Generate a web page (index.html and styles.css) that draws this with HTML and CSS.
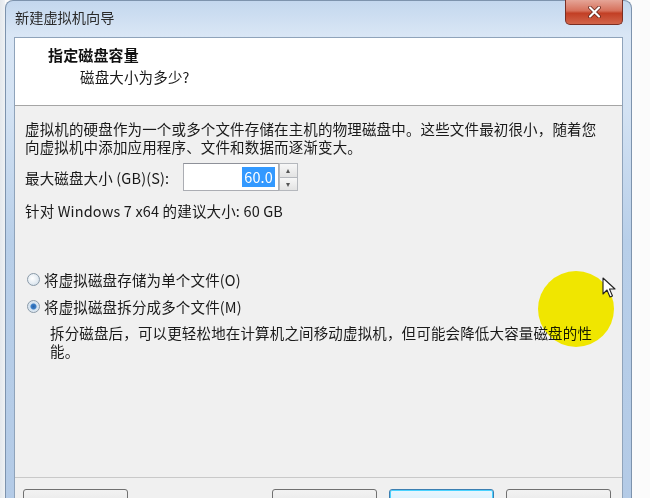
FILE: index.html
```html
<!DOCTYPE html>
<html>
<head>
  <meta charset="utf-8">
  <title>新建虚拟机向导</title>
  <link rel="stylesheet" href="styles.css">
</head>
<body>

<div class="desk">
  <div class="window">
    <div class="titlebar">
      <span class="title">新建虚拟机向导</span>
      <button class="close" title="关闭">
        <svg width="13" height="12" viewBox="0 0 13 12">
          <path d="M2 1.5 L11 10.5 M11 1.5 L2 10.5" stroke="#5a1a10" stroke-width="3.6" stroke-linecap="round"/>
          <path d="M2 1.5 L11 10.5 M11 1.5 L2 10.5" stroke="#fff" stroke-width="2.2" stroke-linecap="round"/>
        </svg>
      </button>
    </div>

    <div class="client">
      <div class="header">
        <div class="header-title">指定磁盘容量</div>
        <div class="header-sub">磁盘大小为多少?</div>
      </div>

      <div class="page">
        <p class="intro">虚拟机的硬盘作为一个或多个文件存储在主机的物理磁盘中。这些文件最初很小，随着您<br>向虚拟机中添加应用程序、文件和数据而逐渐变大。</p>

        <div class="size-row">
          <label class="size-label">最大磁盘大小 (GB)(S):</label>
          <div class="spinbox">
            <div class="spin-field"><span class="spin-value">60.0</span></div>
            <div class="spin-buttons">
              <span class="spin-btn">&#9652;</span>
              <span class="spin-btn">&#9662;</span>
            </div>
          </div>
        </div>

        <p class="hint">针对 Windows 7 x64 的建议大小: 60 GB</p>

        <div class="options">
          <label class="radio"><span class="radio-mark"></span>将虚拟磁盘存储为单个文件(O)</label>
          <label class="radio checked"><span class="radio-mark"></span>将虚拟磁盘拆分成多个文件(M)</label>
          <p class="option-desc">拆分磁盘后，可以更轻松地在计算机之间移动虚拟机，但可能会降低大容量磁盘的性<br>能。</p>
        </div>
      </div>

      <!-- only the top edge of the button row is on screen -->
      <div class="footer">
        <button class="btn" aria-label="帮助"></button>
        <span class="footer-gap"></span>
        <button class="btn" aria-label="上一步(B)"></button>
        <button class="btn default" aria-label="下一步(N)"></button>
        <button class="btn" aria-label="取消"></button>
      </div>
    </div>
  </div>

  <!-- pointer highlight and cursor from the screen recorder -->
  <div class="spot"></div>
  <svg class="cursor" width="14" height="22" viewBox="0 0 14 22">
    <path d="M1 1 L1 17 L5 13 L8 20 L10.5 19 L7.5 12 L13 12 Z" fill="#fff" stroke="#222" stroke-width="1.1" stroke-linejoin="round"/>
  </svg>
</div>

</body>
</html>
```

FILE: styles.css
```css
html, body {
  margin: 0;
  height: 100%;
  overflow: hidden;
}
body {
  background: #f6f7f8;
  font-family: "Noto Sans CJK SC", "Microsoft YaHei", sans-serif;
  font-size: 14.5px;
  letter-spacing: 0.15px;
  color: #1a1a1a;
}
.desk {
  position: relative;
  width: 650px;
  height: 498px;
  overflow: hidden;
  background: linear-gradient(to right, #e4e8ec 0, #eef1f4 5px, #fbfbfb 5px);
}

/* Aero style window frame */
.window {
  box-sizing: border-box;
  width: 627px;
  height: 540px;
  margin-left: 5px;
  padding: 0 8px;
  border: 1px solid #7d93ad;
  border-bottom: none;
  border-radius: 8px 8px 0 0;
  background: linear-gradient(to bottom, #c3d7ee 0, #d9e6f5 34px, #d3e2f3 110px, #b8cfe9 240px, #b3cae6 100%);
}
.titlebar {
  display: flex;
  align-items: flex-start;
  height: 36px;
}
.title {
  margin-top: 7px;
  padding-left: 1px;
  color: #2a2a2a;
  font-size: 14.2px;
  line-height: 18px;
  letter-spacing: 0;
}
.close {
  margin-left: auto;
  margin-top: -1px;
  width: 58px;
  height: 25px;
  padding: 0;
  border: 1px solid #7a2e22;
  border-top: none;
  border-radius: 0 0 5px 5px;
  background: linear-gradient(to bottom, #e5a597 0, #d6705b 45%, #c23f25 55%, #d2654a 100%);
  display: flex;
  align-items: center;
  justify-content: center;
}

.client {
  box-sizing: border-box;
  height: 520px;
  border: 1px solid #8fa3ba;
  background: #f0f0f0;
  display: flex;
  flex-direction: column;
}
.header {
  height: 68px;
  box-sizing: border-box;
  padding: 8px 0 0 33px;
  background: #fff;
  border-bottom: 1px solid #a5a5a5;
}
.header-title {
  font-weight: bold;
  font-size: 15px;
  line-height: 18px;
  color: #111;
}
.header-sub {
  margin-top: 4px;
  padding-left: 32px;
  line-height: 18px;
}

.page {
  height: 371px;
  box-sizing: border-box;
  padding: 14px 0 0 10px;
}
.page p {
  margin: 0;
  line-height: 18px;
}
.size-row {
  display: flex;
  align-items: center;
  margin-top: 7px;
  height: 28px;
}
.size-label {
  width: 158px;
}
.spinbox {
  display: flex;
  height: 28px;
}
.spin-field {
  box-sizing: border-box;
  width: 96px;
  height: 28px;
  border: 1px solid #abadb3;
  border-top-color: #8e9199;
  background: #fff;
  display: flex;
  align-items: center;
  justify-content: flex-end;
  padding-right: 3px;
}
.spin-value {
  background: #3399ff;
  color: #fff;
  padding: 0 2px;
  line-height: 20px;
}
.spin-buttons {
  display: flex;
  flex-direction: column;
  width: 19px;
}
.spin-btn {
  flex: 1;
  box-sizing: border-box;
  border: 1px solid #b5b8bd;
  background: linear-gradient(to bottom, #f7f7f7, #e3e3e3);
  color: #555;
  font-size: 8px;
  line-height: 12px;
  text-align: center;
}
.spin-btn + .spin-btn {
  border-top: none;
}
.hint {
  margin-top: 11px !important;
}

.options {
  margin-top: 50px;
}
.radio {
  display: flex;
  align-items: center;
  height: 18px;
  margin-left: 2px;
}
.radio + .radio {
  margin-top: 9px;
}
.radio-mark {
  box-sizing: border-box;
  width: 13px;
  height: 13px;
  margin-right: 4px;
  border-radius: 50%;
  border: 1px solid #8a9aa8;
  background: radial-gradient(circle at 40% 40%, #ffffff 0, #e7eef4 50%, #c6d6e4 100%);
}
.radio.checked .radio-mark {
  background: radial-gradient(circle, #2b63a8 0, #3b7fc8 2.5px, #d4e2ef 3.5px, #e9f0f6 100%);
}
.option-desc {
  margin-top: 9px !important;
  padding-left: 25px;
}

.footer {
  display: flex;
  align-items: flex-start;
  border-top: 1px solid #c9c9c9;
  padding: 11px 11px 0 8px;
  gap: 12px;
}
.footer-gap {
  flex: 1;
}
.btn {
  box-sizing: border-box;
  width: 105px;
  height: 24px;
  border: 1px solid #707070;
  border-radius: 3px;
  background: linear-gradient(to bottom, #f2f2f2 0, #ebebeb 50%, #dddddd 51%, #cfcfcf 100%);
}
.btn.default {
  border-color: #3c7fb1;
  background: linear-gradient(to bottom, #eaf6fd 0, #d9f0fc 50%, #bee6fd 51%, #a7d9f5 100%);
  box-shadow: inset 0 0 0 1px #48d2ff;
}

.spot {
  position: absolute;
  left: 538px;
  top: 271px;
  width: 76px;
  height: 76px;
  border-radius: 50%;
  background: #f7e600;
  mix-blend-mode: darken;
}
.cursor {
  position: absolute;
  left: 602px;
  top: 277px;
}
```
